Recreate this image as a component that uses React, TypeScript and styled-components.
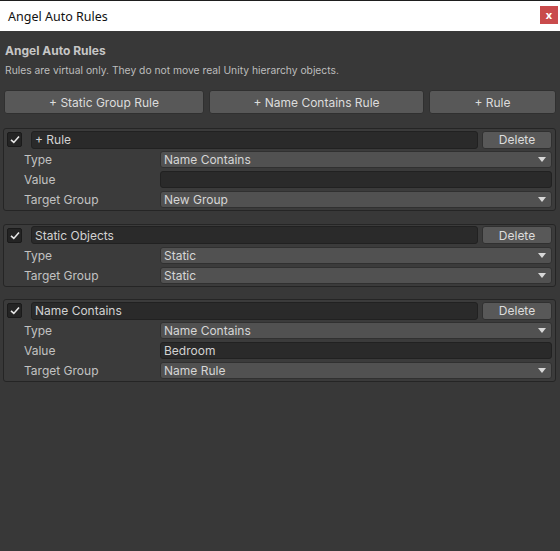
import React from "react";
import styled, { createGlobalStyle } from "styled-components";

const GlobalStyle = createGlobalStyle`
  html, body {
    margin: 0;
    padding: 0;
    background: #383838;
  }
  body {
    font-family: Inter, "Noto Sans", sans-serif;
  }
`;

const Window = styled.div`
  width: 560px;
  height: 551px;
  display: flex;
  flex-direction: column;
  background: #383838;
  overflow: hidden;
`;

const TitleBar = styled.header`
  height: 30px;
  border-top: 1px solid #1e1e1e;
  background: #ffffff;
  display: flex;
  align-items: center;
  justify-content: space-between;
  padding: 0 2px 0 8px;
  font-family: "Noto Sans", "Open Sans", sans-serif;
  font-size: 12.5px;
  color: #111;
`;

const CloseButton = styled.div`
  width: 18px;
  height: 18px;
  margin-top: -3px;
  background: #c94b4c;
  color: #fff;
  font-size: 11px;
  font-weight: 700;
  display: flex;
  align-items: center;
  justify-content: center;
  line-height: 1;
`;

const Body = styled.main`
  padding: 12px 4px 0 3px;
  display: flex;
  flex-direction: column;
`;

const Heading = styled.h1`
  margin: 0 0 0 2px;
  font-size: 12px;
  line-height: 16px;
  font-weight: 700;
  color: #c6c6c6;
`;

const Hint = styled.p`
  margin: 4px 0 0 2px;
  font-size: 10.3px;
  line-height: 14px;
  color: #bdbdbd;
`;

const ButtonRow = styled.div`
  display: grid;
  grid-template-columns: 200px 215px 1fr;
  gap: 5px;
  margin: 13px 0 0 1px;
`;

const Button = styled.button<{ $small?: boolean }>`
  height: ${(p) => (p.$small ? "18px" : "24px")};
  box-sizing: border-box;
  background: #585858;
  border: 1px solid #303030;
  border-radius: 3px;
  color: #dcdcdc;
  font-family: Inter, "Noto Sans", sans-serif;
  font-size: 12px;
  padding: 0;
  display: flex;
  align-items: center;
  justify-content: center;
`;

const Card = styled.section<{ $first?: boolean }>`
  margin-top: ${(p) => (p.$first ? "14px" : "12.5px")};
  border: 1px solid #252525;
  border-radius: 3px;
  background: #3b3b3b;
  padding: 1px 3px 2px 3px;
  display: flex;
  flex-direction: column;
`;

const HeaderRow = styled.div`
  display: flex;
  align-items: center;
  height: 19px;
  margin-bottom: 2px;
`;

const Check = styled.div`
  width: 13px;
  height: 13px;
  background: #242424;
  border: 1px solid #1a1a1a;
  border-radius: 2px;
  display: flex;
  align-items: center;
  justify-content: center;
  margin-right: 9px;
`;

const TextField = styled.div<{ $grow?: boolean }>`
  height: 17px;
  background: #2a2a2a;
  border: 1px solid #212121;
  border-radius: 3px;
  display: flex;
  align-items: center;
  padding: 0 3px;
  color: #d2d2d2;
  font-size: 12px;
  flex: 1;
  box-sizing: border-box;
  ${(p) => p.$grow && "height: 18px; margin-right: 4px;"}
`;

const DeleteButton = styled(Button)`
  width: 70px;
`;

const FieldRow = styled.div`
  display: flex;
  align-items: center;
  height: 17px;
  margin-top: 3px;
  &:first-of-type {
    margin-top: 0;
  }
`;

const Label = styled.span`
  width: 153px;
  padding-left: 17px;
  box-sizing: border-box;
  font-size: 12px;
  color: #c2c2c2;
  flex-shrink: 0;
`;

const Dropdown = styled.div`
  flex: 1;
  height: 17px;
  box-sizing: border-box;
  background: #515151;
  border: 1px solid #303030;
  border-radius: 3px;
  display: flex;
  align-items: center;
  justify-content: space-between;
  padding: 0 5px 0 3px;
  color: #d6d6d6;
  font-size: 12px;
`;

const Fields = styled.div`
  display: flex;
  flex-direction: column;
`;

const Arrow = () => (
  <svg width="8" height="5" viewBox="0 0 8 5">
    <path d="M0 0 H8 L4 5 Z" fill="#d8d8d8" />
  </svg>
);

const Tick = () => (
  <svg width="10" height="9" viewBox="0 0 10 9">
    <path d="M1 4.8 L3.8 7.4 L9 1.4" stroke="#e8e8e8" strokeWidth="1.6" fill="none" />
  </svg>
);

type Rule = {
  name: string;
  type: string;
  value?: string;
  group: string;
};

const rules: Rule[] = [
  { name: "+ Rule", type: "Name Contains", value: "", group: "New Group" },
  { name: "Static Objects", type: "Static", group: "Static" },
  { name: "Name Contains", type: "Name Contains", value: "Bedroom", group: "Name Rule" },
];

function RuleCard({ rule, first }: { rule: Rule; first?: boolean }) {
  return (
    <Card $first={first}>
      <HeaderRow>
        <Check>
          <Tick />
        </Check>
        <TextField $grow>{rule.name}</TextField>
        <DeleteButton $small>Delete</DeleteButton>
      </HeaderRow>
      <Fields>
        <FieldRow>
          <Label>Type</Label>
          <Dropdown>
            {rule.type}
            <Arrow />
          </Dropdown>
        </FieldRow>
        {rule.value !== undefined && (
          <FieldRow>
            <Label>Value</Label>
            <TextField>{rule.value}</TextField>
          </FieldRow>
        )}
        <FieldRow>
          <Label>Target Group</Label>
          <Dropdown>
            {rule.group}
            <Arrow />
          </Dropdown>
        </FieldRow>
      </Fields>
    </Card>
  );
}

export default function App() {
  return (
    <Window>
      <GlobalStyle />
      <TitleBar>
        <span>Angel Auto Rules</span>
        <CloseButton>x</CloseButton>
      </TitleBar>
      <Body>
        <Heading>Angel Auto Rules</Heading>
        <Hint>Rules are virtual only. They do not move real Unity hierarchy objects.</Hint>
        <ButtonRow>
          <Button>+ Static Group Rule</Button>
          <Button>+ Name Contains Rule</Button>
          <Button>+ Rule</Button>
        </ButtonRow>
        {rules.map((r, i) => (
          <RuleCard key={i} rule={r} first={i === 0} />
        ))}
      </Body>
    </Window>
  );
}
